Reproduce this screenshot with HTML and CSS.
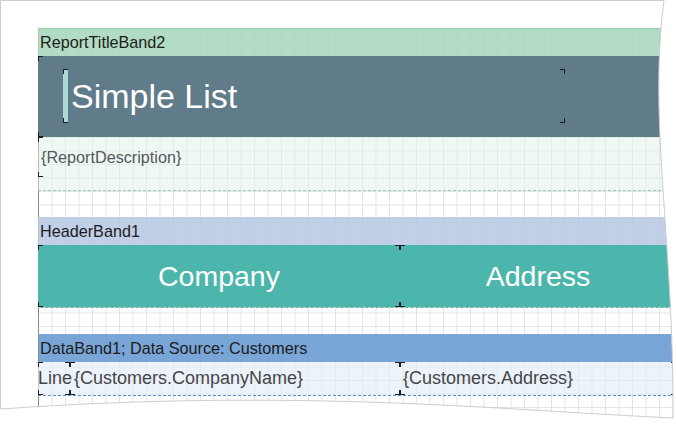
FILE: index.html
```html
<!DOCTYPE html>
<html>
<head>
<meta charset="utf-8">
<link rel="stylesheet" href="styles.css">
</head>
<body>
<div class="sheet">
  <div class="page">
    <div class="canvas">
      <div class="band-head head-green">ReportTitleBand2</div>
      <div class="band-body body-green">
        <div class="title-obj mk">
          <div class="title-text mk"><span class="bar"></span><span class="title-label">Simple List</span></div>
        </div>
        <div class="desc-text mk">{ReportDescription}</div>
      </div>
      <div class="gap"></div>
      <div class="band-head head-lav">HeaderBand1</div>
      <div class="band-body body-teal">
        <div class="cell cell-company mk">Company</div>
        <div class="cell cell-address mk">Address</div>
      </div>
      <div class="gap"></div>
      <div class="band-head head-blue">DataBand1; Data Source: Customers</div>
      <div class="band-body body-data">
        <div class="dcell d-line mk">Line</div>
        <div class="dcell d-name mk">{Customers.CompanyName}</div>
        <div class="dcell d-addr mk">{Customers.Address}</div>
      </div>
    </div>
  </div>
  <svg class="edge" width="676" height="424" viewBox="0 0 676 424">
    <path d="M0.5,0.5 L664,0.5 C648,120 674,240 673,418 C500,410 300,388 0.5,409 Z" fill="none" stroke="#cdcdcd" stroke-width="1"/>
  </svg>
</div>
</body>
</html>
```
FILE: styles.css
```css
html, body {
  margin: 0;
  padding: 0;
  background: #ffffff;
}

body {
  font-family: "Liberation Sans", Arial, sans-serif;
}

.sheet {
  position: relative;
  width: 676px;
  height: 424px;
  overflow: hidden;
}

.page {
  width: 676px;
  height: 424px;
  box-sizing: border-box;
  padding: 28px 0 0 38px;
  background: #ffffff;
  clip-path: path('M0,0 L664,0 C648,120 674,240 673,418 C500,410 300,388 0,409 Z');
}

.canvas {
  height: 396px;
  width: 638px;
  display: flex;
  flex-direction: column;
  background-color: #ffffff;
  background-image:
    linear-gradient(#8a8a8a, #8a8a8a),
    linear-gradient(to right, #e3e3e3 1px, transparent 1px),
    linear-gradient(to bottom, #e3e3e3 1px, transparent 1px);
  background-size: 1px 100%, 13.5px 13.5px, 13.5px 13.5px;
  background-position: 0 0, 0 28px, 0 28px;
  background-repeat: no-repeat, repeat, repeat;
}

.band-head {
  height: 28px;
  flex: none;
  box-sizing: border-box;
  display: flex;
  align-items: center;
  padding-left: 2px;
  font-size: 16.2px;
  color: #1c1c1c;
}

.head-green {
  background: rgba(164, 214, 186, 0.85);
  border-top: 1px solid #98cfb0;
}

.head-lav {
  background: rgba(184, 200, 228, 0.88);
}

.head-blue {
  background: rgba(104, 152, 210, 0.88);
}

.band-body {
  flex: none;
  box-sizing: border-box;
}

.body-green {
  height: 135px;
  background: rgba(226, 241, 231, 0.5);
  border-bottom: 1px dashed #9ccfb2;
}

.gap {
  height: 26px;
  flex: none;
}

.mk {
  position: relative;
}

.mk::after {
  content: "";
  position: absolute;
  inset: 0;
  pointer-events: none;
  background:
    linear-gradient(#1e1e1e, #1e1e1e) left top / 5px 1px no-repeat,
    linear-gradient(#1e1e1e, #1e1e1e) left top / 1px 5px no-repeat,
    linear-gradient(#1e1e1e, #1e1e1e) right top / 5px 1px no-repeat,
    linear-gradient(#1e1e1e, #1e1e1e) right top / 1px 5px no-repeat,
    linear-gradient(#1e1e1e, #1e1e1e) left bottom / 5px 1px no-repeat,
    linear-gradient(#1e1e1e, #1e1e1e) left bottom / 1px 5px no-repeat,
    linear-gradient(#1e1e1e, #1e1e1e) right bottom / 5px 1px no-repeat,
    linear-gradient(#1e1e1e, #1e1e1e) right bottom / 1px 5px no-repeat;
}

.title-obj {
  height: 81px;
  box-sizing: border-box;
  background: #607c8a;
  padding: 13px 0 0 25px;
}

.title-text {
  width: 502px;
  height: 54px;
  display: flex;
  align-items: center;
  gap: 3px;
}

.bar {
  align-self: stretch;
  width: 5px;
  background: #a9d9d2;
}

.title-label {
  font-size: 34px;
  color: #ffffff;
  line-height: 1;
}

.desc-text {
  height: 40px;
  display: flex;
  align-items: center;
  padding-left: 3px;
  font-size: 16.2px;
  color: #525a60;
}

.body-teal {
  height: 63px;
  display: flex;
  background: #4db6ac;
  border-bottom: 1px dashed #c8c8c8;
}

.cell {
  display: flex;
  align-items: center;
  justify-content: center;
  font-size: 28.5px;
  color: #ffffff;
}

.cell-company {
  width: 362px;
  flex: none;
}

.cell-address {
  flex: 1;
}

.body-data {
  height: 34px;
  display: flex;
  background: rgba(226, 236, 249, 0.65);
  border-bottom: 1px dashed #5d8fce;
}

.dcell {
  display: flex;
  align-items: center;
  font-size: 18px;
  color: #464646;
  white-space: nowrap;
}

.d-line {
  width: 32px;
  flex: none;
  box-sizing: border-box;
}

.d-name {
  width: 330px;
  flex: none;
  padding-left: 4px;
  box-sizing: border-box;
}

.d-addr {
  flex: 1;
  padding-left: 3px;
}

.edge {
  position: absolute;
  top: 0;
  left: 0;
  pointer-events: none;
}
```
